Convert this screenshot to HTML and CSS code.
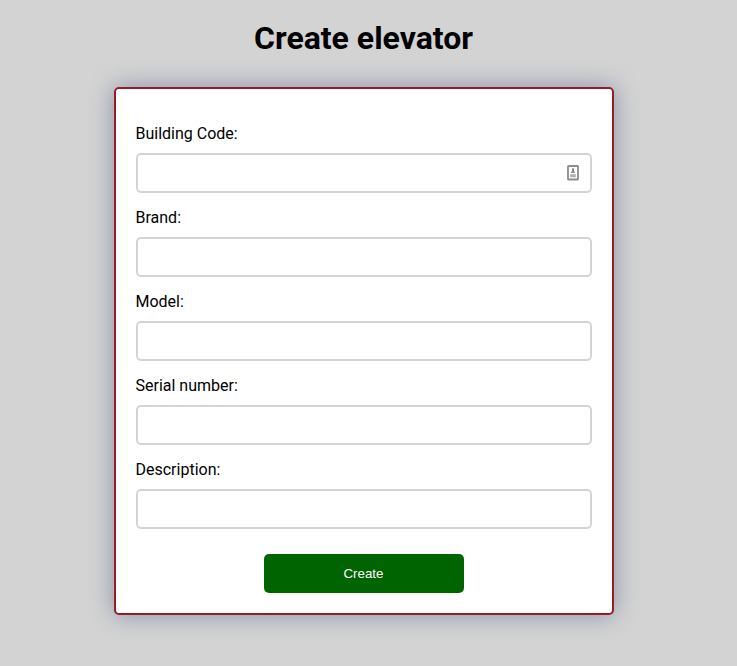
FILE: index.html
```html
<!DOCTYPE html>
<html lang="en">
<head>
<meta charset="utf-8">
<title>Create elevator</title>
<link rel="stylesheet" href="styles.css">
</head>
<body>
<main class="page">
  <h1 class="title">Create elevator</h1>
  <form class="card">
    <label class="label" for="building">Building Code:</label>
    <div class="field">
      <input class="input" id="building" type="text">
      <svg class="autofill" width="12" height="16" viewBox="0 0 12 16"><rect x="1" y="1" width="10" height="13.5" rx=".5" fill="#fff" stroke="#8c8c8c" stroke-width="1.8"/><path d="M5 3.3h2v2.4l1.2 2.4H3.8L5 5.7z" fill="#8c8c8c"/><path d="M3.2 9.2h5.6v3H3.2z" fill="#b0b0b0"/></svg>
    </div>
    <label class="label" for="brand">Brand:</label>
    <input class="input" id="brand" type="text">
    <label class="label" for="model">Model:</label>
    <input class="input" id="model" type="text">
    <label class="label" for="serial">Serial number:</label>
    <input class="input" id="serial" type="text">
    <label class="label" for="description">Description:</label>
    <input class="input" id="description" type="text">
    <button class="button" type="button">Create</button>
  </form>
</main>
</body>
</html>
```
FILE: styles.css
```css
* { box-sizing: border-box; }
body { margin: 0; background: #d3d3d3; color: #000; font-family: Roboto, sans-serif; font-size: 16px; }
.page { width: 727px; min-height: 666px; padding-top: 19px; }
.title { margin: 0 0 30px; font-size: 32px; line-height: 38px; font-weight: 700; text-align: center; }
.card { width: 500px; height: 528px; margin: 0 auto; padding: 35px 20px 20px; background: #fff; border: 2px solid #981b25; border-radius: 5px; box-shadow: 0 0 25px #8791a7; }
.label { display: block; height: 19px; line-height: 19px; margin-bottom: 10px; }
.input { display: block; width: 100%; height: 40px; margin: 0 0 15px; padding: 8px; border: 2px solid #d3d3d3; border-radius: 5px; background: #fff; font: inherit; }
.field { position: relative; }
.autofill { position: absolute; right: 13px; top: 12px; }
.button { display: block; width: 200px; height: 39px; margin: 25px auto 0; border: 0; border-radius: 5px; background: #006400; color: #fff; font: 13.333px "Liberation Sans", Arial, sans-serif; }
```
